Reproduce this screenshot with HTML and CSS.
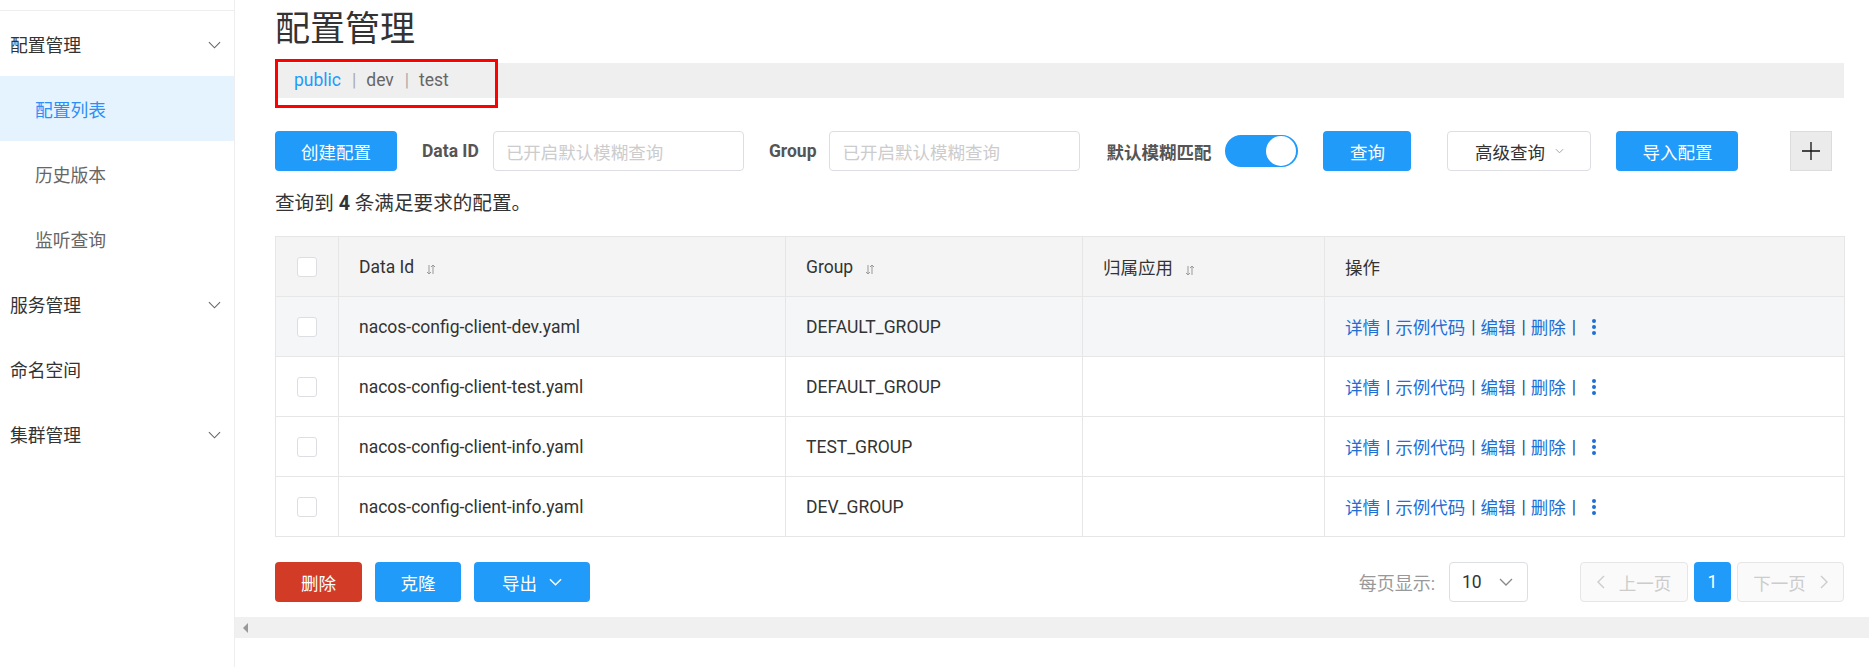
FILE: index.html
```html
<!DOCTYPE html>
<html lang="zh-CN">
<head>
<meta charset="utf-8">
<title>配置管理</title>
<link rel="stylesheet" href="styles.css">
</head>
<body>
<div class="app">
  <aside class="sidebar">
    <div class="side-top"></div>
    <div class="menu-item top">配置管理<svg class="chev" viewBox="0 0 14 8"><path d="M1 1l6 6 6-6" fill="none" stroke="#666" stroke-width="1.2"/></svg></div>
    <div class="menu-item sub active">配置列表</div>
    <div class="menu-item sub">历史版本</div>
    <div class="menu-item sub">监听查询</div>
    <div class="menu-item top">服务管理<svg class="chev" viewBox="0 0 14 8"><path d="M1 1l6 6 6-6" fill="none" stroke="#666" stroke-width="1.2"/></svg></div>
    <div class="menu-item top">命名空间</div>
    <div class="menu-item top">集群管理<svg class="chev" viewBox="0 0 14 8"><path d="M1 1l6 6 6-6" fill="none" stroke="#666" stroke-width="1.2"/></svg></div>
  </aside>
  <main class="main">
    <div class="content">
      <h1 class="title">配置管理</h1>
      <div class="ns-wrap">
        <div class="ns-bar">
          <span class="ns ns-active">public</span><span class="ns-sep">|</span><span class="ns">dev</span><span class="ns-sep">|</span><span class="ns">test</span>
        </div>
        <div class="mark-box"></div>
      </div>
      <div class="toolbar">
        <button class="btn primary w-create">创建配置</button>
        <label class="field-label ml-25">Data ID</label>
        <div class="input ml-14">已开启默认模糊查询</div>
        <label class="field-label ml-25">Group</label>
        <div class="input ml-13">已开启默认模糊查询</div>
        <label class="field-label ml-26">默认模糊匹配</label>
        <div class="switch ml-14"><span class="knob"></span></div>
        <button class="btn primary w-query ml-25">查询</button>
        <button class="btn normal w-adv ml-36">高级查询<svg class="mini-chev" viewBox="0 0 10 6"><path d="M1 1l4 4 4-4" fill="none" stroke="#999" stroke-width="1"/></svg></button>
        <button class="btn primary w-create ml-25">导入配置</button>
        <button class="btn plus ml-52"><svg viewBox="0 0 20 20" width="20" height="20"><path d="M10 1v18M1 10h18" stroke="#111" stroke-width="1.3"/></svg></button>
      </div>
      <p class="result">查询到 <b>4</b> 条满足要求的配置。</p>
      <table class="grid">
        <colgroup>
          <col class="c-check"><col class="c-id"><col class="c-group"><col class="c-app"><col class="c-op">
        </colgroup>
        <thead>
          <tr>
            <th class="cell-check"><span class="checkbox"></span></th>
            <th>Data Id<svg class="sort" viewBox="0 0 10 11"><path d="M3 1v9M1 8l2 2 2-2M7 10V1M5 3l2-2 2 2" fill="none" stroke="#999" stroke-width="1"/></svg></th>
            <th>Group<svg class="sort" viewBox="0 0 10 11"><path d="M3 1v9M1 8l2 2 2-2M7 10V1M5 3l2-2 2 2" fill="none" stroke="#999" stroke-width="1"/></svg></th>
            <th>归属应用<svg class="sort" viewBox="0 0 10 11"><path d="M3 1v9M1 8l2 2 2-2M7 10V1M5 3l2-2 2 2" fill="none" stroke="#999" stroke-width="1"/></svg></th>
            <th>操作</th>
          </tr>
        </thead>
        <tbody>
          <tr class="hover">
            <td class="cell-check"><span class="checkbox"></span></td>
            <td>nacos-config-client-dev.yaml</td>
            <td>DEFAULT_GROUP</td>
            <td></td>
            <td><div class="ops"><a>详情</a><span class="sep">|</span><a>示例代码</a><span class="sep">|</span><a>编辑</a><span class="sep">|</span><a>删除</a><span class="sep">|</span><span class="dots"><i></i><i></i><i></i></span></div></td>
          </tr>
          <tr>
            <td class="cell-check"><span class="checkbox"></span></td>
            <td>nacos-config-client-test.yaml</td>
            <td>DEFAULT_GROUP</td>
            <td></td>
            <td><div class="ops"><a>详情</a><span class="sep">|</span><a>示例代码</a><span class="sep">|</span><a>编辑</a><span class="sep">|</span><a>删除</a><span class="sep">|</span><span class="dots"><i></i><i></i><i></i></span></div></td>
          </tr>
          <tr>
            <td class="cell-check"><span class="checkbox"></span></td>
            <td>nacos-config-client-info.yaml</td>
            <td>TEST_GROUP</td>
            <td></td>
            <td><div class="ops"><a>详情</a><span class="sep">|</span><a>示例代码</a><span class="sep">|</span><a>编辑</a><span class="sep">|</span><a>删除</a><span class="sep">|</span><span class="dots"><i></i><i></i><i></i></span></div></td>
          </tr>
          <tr>
            <td class="cell-check"><span class="checkbox"></span></td>
            <td>nacos-config-client-info.yaml</td>
            <td>DEV_GROUP</td>
            <td></td>
            <td><div class="ops"><a>详情</a><span class="sep">|</span><a>示例代码</a><span class="sep">|</span><a>编辑</a><span class="sep">|</span><a>删除</a><span class="sep">|</span><span class="dots"><i></i><i></i><i></i></span></div></td>
          </tr>
        </tbody>
      </table>
      <div class="footer">
        <div class="actions">
          <button class="btn danger w-del">删除</button>
          <button class="btn primary w-clone">克隆</button>
          <button class="btn primary w-export">导出<svg class="exp-chev" viewBox="0 0 14 8"><path d="M1 1l6 6 6-6" fill="none" stroke="#fff" stroke-width="1.6"/></svg></button>
        </div>
        <div class="pager">
          <span class="page-label">每页显示:</span>
          <div class="select">10<svg viewBox="0 0 14 8" width="14" height="8"><path d="M1 1l6 6 6-6" fill="none" stroke="#888" stroke-width="1.3"/></svg></div>
          <div class="pg prev"><svg viewBox="0 0 8 14" width="8" height="14"><path d="M7 1L1 7l6 6" fill="none" stroke="#ccc" stroke-width="1.4"/></svg>上一页</div>
          <div class="pg cur">1</div>
          <div class="pg next">下一页<svg viewBox="0 0 8 14" width="8" height="14"><path d="M1 1l6 6-6 6" fill="none" stroke="#ccc" stroke-width="1.4"/></svg></div>
        </div>
      </div>
    </div>
    <div class="hscroll"><svg viewBox="0 0 6 10" width="6" height="10"><path d="M5 0v10L0 5z" fill="#999"/></svg></div>
  </main>
</div>
</body>
</html>
```
FILE: styles.css
```css
* { box-sizing: border-box; }
html, body { margin: 0; padding: 0; background: #fff; }
body {
  font-family: Roboto, "Noto Sans CJK SC", "Liberation Sans", sans-serif;
  font-size: 17.5px;
  color: #333;
  width: 1869px;
  height: 667px;
  overflow: hidden;
}
.app { display: flex; height: 667px; }

/* sidebar */
.sidebar {
  width: 235px;
  flex: none;
  border-right: 1px solid #eee;
}
.side-top { height: 11px; border-bottom: 1px solid #eee; }
.menu-item {
  height: 65px;
  display: flex;
  align-items: center;
  position: relative;
  color: #333;
  font-size: 17.8px;
}
.menu-item.top { padding-left: 10px; }
.menu-item.sub { padding-left: 35px; color: #666; }
.menu-item.active { background: #e4f3fe; color: #2a8ff7; }
.chev { position: absolute; left: 208px; top: 30px; width: 13px; height: 8px; }

/* main */
.main { flex: 1; display: flex; flex-direction: column; min-width: 0; }
.content { padding: 0 25px 0 40px; }
.title {
  margin: 0;
  padding-top: 5px;
  font-size: 35px;
  line-height: 50px;
  font-weight: normal;
  color: #333;
}
.ns-wrap { position: relative; margin-top: 8px; }
.ns-bar {
  height: 35px;
  background: #efefef;
  display: flex;
  align-items: center;
  padding-left: 19px;
  padding-bottom: 1px;
}
.ns { color: #666; }
.ns-active { color: #209bfa; }
.ns-sep { color: #aaa; margin: 0 10px 0 11px; }
.mark-box {
  position: absolute;
  left: 0;
  top: -4px;
  width: 223px;
  height: 49px;
  border: 3px solid #f00;
}

/* toolbar */
.toolbar { display: flex; align-items: center; margin-top: 33px; height: 40px; }
.btn {
  height: 40px;
  border-radius: 4px;
  border: 1px solid transparent;
  font-family: inherit;
  font-size: 17.5px;
  padding: 0;
  display: inline-flex;
  align-items: center;
  justify-content: center;
  flex: none;
}
.primary { background: #209bfa; color: #fff; }
.danger { background: #d23b26; color: #fff; }
.normal { background: #fff; color: #333; border-color: #dcdee3; }
.plus { background: #ebebeb; border-color: #dcdcdc; border-radius: 0; width: 42px; }
.w-create { width: 122px; }
.w-query { width: 88px; }
.w-adv { width: 144px; }
.w-del { width: 87px; }
.w-clone { width: 86px; }
.w-export { width: 116px; }
.mini-chev { width: 9px; height: 6px; margin-left: 10px; }
.exp-chev { width: 13px; height: 8px; margin-left: 12px; }
.field-label { font-weight: bold; color: #555; flex: none; }
.input {
  width: 251px;
  height: 40px;
  border: 1px solid #dcdee3;
  border-radius: 4px;
  color: #ccc;
  padding-left: 12px;
  display: flex;
  align-items: center;
  flex: none;
}
.switch {
  width: 73px;
  height: 32px;
  border-radius: 16px;
  background: #209bfa;
  position: relative;
  flex: none;
}
.knob {
  position: absolute;
  right: 2px;
  top: 1px;
  width: 30px;
  height: 30px;
  border-radius: 50%;
  background: #fff;
}
.ml-13 { margin-left: 13px; }
.ml-14 { margin-left: 14px; }
.ml-25 { margin-left: 25px; }
.ml-26 { margin-left: 26px; }
.ml-36 { margin-left: 36px; }
.ml-52 { margin-left: 52px; }

.result { margin: 21px 0 0; line-height: 24px; font-size: 19.6px; }
.result b { font-weight: bold; }

/* table */
.grid {
  margin-top: 20px;
  width: 1569px;
  border-collapse: collapse;
  table-layout: fixed;
}
.c-check { width: 63px; }
.c-id { width: 447px; }
.c-group { width: 297px; }
.c-app { width: 242px; }
.c-op { width: 520px; }
.grid th, .grid td {
  height: 60px;
  border: 1px solid #e6e6e6;
  padding: 0 20px;
  text-align: left;
  font-weight: normal;
  vertical-align: middle;
  color: #333;
}
.grid thead th { background: #f4f4f4; }
.grid tr.hover td { background: #f5f6f8; }
.grid .cell-check { padding: 0; text-align: center; }
.checkbox {
  display: inline-block;
  width: 20px;
  height: 20px;
  border: 1px solid #dcdee3;
  border-radius: 3px;
  background: #fff;
  vertical-align: middle;
}
.sort { width: 10px; height: 11px; margin-left: 12px; vertical-align: -2px; }
.ops { display: flex; align-items: center; color: #1d6fd6; }
.ops a { color: #1d6fd6; }
.ops .sep { color: #2a4f80; margin: 0 5px 0 6px; }
.dots {
  display: flex;
  flex-direction: column;
  gap: 2px;
  margin-left: 11px;
}
.dots i { width: 4px; height: 4px; border-radius: 50%; background: #1d6fd6; display: block; }

/* footer */
.footer {
  margin-top: 25px;
  display: flex;
  justify-content: space-between;
  align-items: center;
  width: 1569px;
}
.actions { display: flex; gap: 13px; }
.pager { display: flex; align-items: center; }
.page-label { color: #999; font-size: 18px; }
.select {
  margin-left: 14px;
  width: 79px;
  height: 40px;
  border: 1px solid #dcdee3;
  border-radius: 4px;
  display: flex;
  align-items: center;
  justify-content: space-between;
  padding: 0 14px 0 12px;
  color: #333;
}
.pg {
  height: 40px;
  border-radius: 4px;
  display: flex;
  align-items: center;
  justify-content: center;
  gap: 14px;
}
.prev, .next {
  width: 108px;
  background: #fafafa;
  border: 1px solid #e6e6e6;
  color: #ccc;
}
.prev { margin-left: 52px; }
.cur { width: 37px; margin: 0 6px; background: #209bfa; color: #fff; }
.next { width: 107px; }

.hscroll {
  margin-top: 15px;
  height: 21px;
  background: #f0f0f0;
  display: flex;
  align-items: center;
  padding-left: 8px;
}
```
